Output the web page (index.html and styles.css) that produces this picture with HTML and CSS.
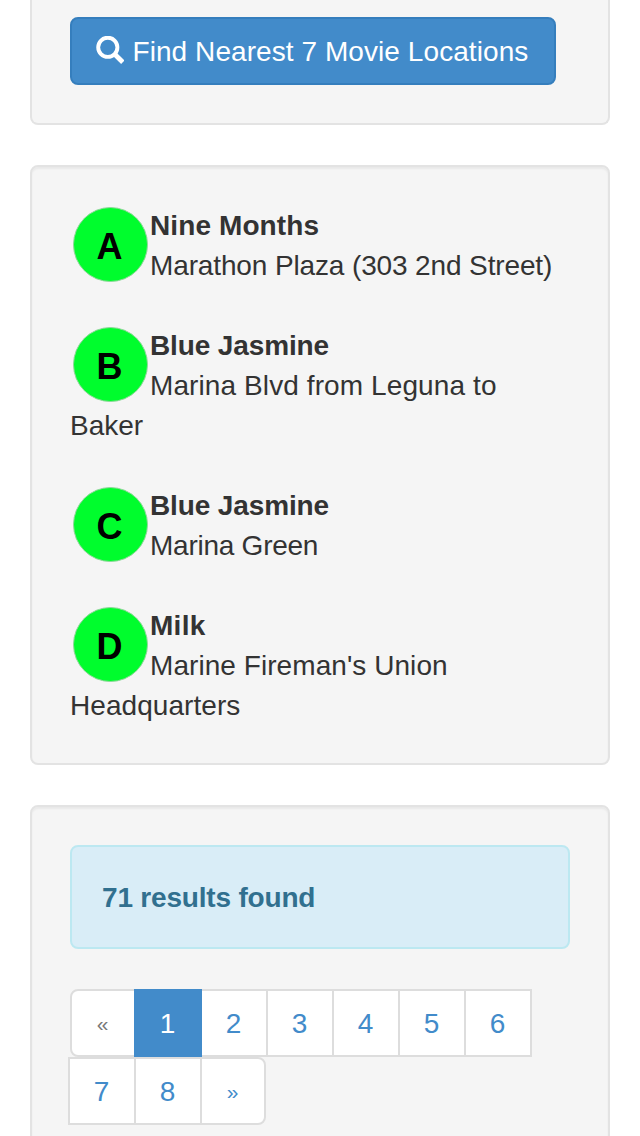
FILE: index.html
```html
<!DOCTYPE html>
<html lang="en">
<head>
<meta charset="utf-8">
<meta name="viewport" content="width=device-width">
<title>Movie Locations</title>
<link rel="stylesheet" href="styles.css">
</head>
<body>
<main class="page">
  <section class="well well-search">
    <button class="btn" type="button">
      <svg class="search-icon" viewBox="0 0 28 28" aria-hidden="true"><circle cx="11.8" cy="11.3" r="9.6" fill="none" stroke="#fff" stroke-width="3.9"/><path d="M18 17.5L26.8 26.2" stroke="#fff" stroke-width="4.8"/></svg>
      <span class="btn-label">Find Nearest 7 Movie Locations</span>
    </button>
  </section>
  <section class="well">
    <ul class="places">
      <li class="place"><span class="pin"><span class="dot">A</span></span><strong class="t-nine">Nine Months</strong><br><span class="a-marathon">Marathon Plaza (303 2nd Street)</span></li>
      <li class="place"><span class="pin"><span class="dot">B</span></span><strong class="t-blue">Blue Jasmine</strong><br><span class="a-blvd">Marina Blvd from Leguna to</span><br>Baker</li>
      <li class="place"><span class="pin"><span class="dot">C</span></span><strong class="t-blue">Blue Jasmine</strong><br><span class="a-green">Marina Green</span></li>
      <li class="place"><span class="pin"><span class="dot">D</span></span><strong class="t-milk">Milk</strong><br><span class="a-union">Marine Fireman's Union<br>Headquarters</span></li>
    </ul>
  </section>
  <section class="well well-results">
    <div class="alert"><strong>71 results found</strong></div>
    <ul class="pagination">
      <li class="cell first disabled">«</li>
      <li class="cell active">1</li>
      <li class="cell">2</li>
      <li class="cell">3</li>
      <li class="cell">4</li>
      <li class="cell">5</li>
      <li class="cell">6</li>
      <li class="cell">7</li>
      <li class="cell">8</li>
      <li class="cell last">»</li>
    </ul>
  </section>
</main>
</body>
</html>
```

FILE: styles.css
```css
* { box-sizing: border-box; }
html, body { margin: 0; height: 1136px; overflow: hidden; }
body {
  background: #fff;
  color: #333;
  font: 28px/40px "Liberation Sans", Arial, sans-serif;
}
ul { list-style: none; margin: 0; padding: 0; }
.page {
  display: flex;
  flex-direction: column;
  gap: 40px;
  height: 1136px;
  padding: 0 30px;
  overflow: hidden;
}
.well {
  flex: none;
  padding: 38px;
  background: #f5f5f5;
  border: 2px solid #e3e3e3;
  border-radius: 8px;
  box-shadow: inset 0 2px 2px rgba(0, 0, 0, .05);
}
.well-search {
  height: 125px;
  padding-top: 17px;
  border-top: 0;
  border-radius: 0 0 8px 8px;
  box-shadow: none;
}
.well-results { height: 400px; }
.btn {
  display: flex;
  align-items: center;
  width: 486px;
  height: 68px;
  padding: 0 24px;
  border: 2px solid #357ebd;
  border-radius: 8px;
  background: #428bca;
  color: #fff;
  font: inherit;
  white-space: nowrap;
}
.btn-label { padding-top: 2px; letter-spacing: .07px; }
.search-icon { flex: none; width: 28px; height: 28px; margin: -3px 8.5px 0 0; }
.places {
  display: flex;
  flex-direction: column;
  gap: 40px;
  padding-top: 1px;
  margin-bottom: -1px;
}
.place { white-space: nowrap; }
.pin { float: left; width: 80px; height: 80px; margin-top: -1px; padding: 2px 3px; }
.dot {
  display: block;
  width: 75px;
  height: 75px;
  padding-right: 2px;
  border: 1px solid #8fd79a;
  border-radius: 50%;
  background: #00fd2d;
  color: #000;
  font-size: 36px;
  font-weight: bold;
  line-height: 78px;
  text-align: center;
}
.t-nine, .a-blvd { letter-spacing: .1px; }
.t-blue, .a-marathon { letter-spacing: -.13px; }
.a-green { letter-spacing: -.25px; }
.t-milk { letter-spacing: .3px; }
.a-union { letter-spacing: .06px; }
.alert {
  height: 104px;
  margin-bottom: 40px;
  padding: 31px 30px 29px;
  border: 2px solid #bce8f1;
  border-radius: 8px;
  background: #d9edf7;
  color: #31708f;
  letter-spacing: -.19px;
}
.pagination { display: flex; flex-wrap: wrap; width: 480px; }
.cell {
  width: 68px;
  height: 68px;
  margin-left: -2px;
  padding-right: 1px;
  border: 2px solid #ddd;
  background: #fff;
  color: #428bca;
  line-height: 66px;
  text-align: center;
}
.first, .last { width: 66px; font-size: 21px; }
.first { margin-left: 0; border-radius: 8px 0 0 8px; }
.last { border-radius: 0 8px 8px 0; }
.disabled { color: #777; }
.active {
  z-index: 1;
  border-color: #428bca;
  background: #428bca;
  color: #fff;
}
```
